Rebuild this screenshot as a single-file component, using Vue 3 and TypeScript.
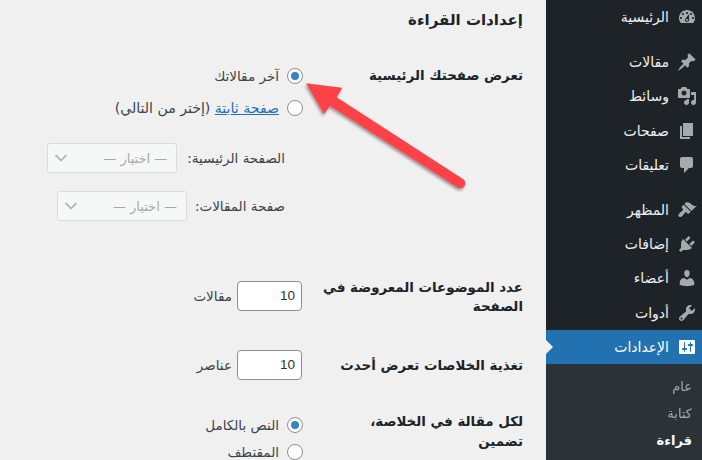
<script setup lang="ts">
const topItems = [
  { label: 'الرئيسية', icon: 'gauge', gap: true },
  { label: 'مقالات', icon: 'pin' },
  { label: 'وسائط', icon: 'media' },
  { label: 'صفحات', icon: 'pages' },
  { label: 'تعليقات', icon: 'comment', gap: true },
  { label: 'المظهر', icon: 'brush' },
  { label: 'إضافات', icon: 'plug' },
  { label: 'أعضاء', icon: 'user' },
  { label: 'أدوات', icon: 'wrench' },
]
const icons: Record<string, string> = {
  gauge: 'M3.760 16h12.480c1.100-1.430 1.760-3.210 1.760-5 0-4.420-3.580-8-8-8s-8 3.580-8 8c0 1.790.660 3.570 1.760 5zm6.240-11c.550 0 1 .45 1 1s-.45 1-1 1-1-.45-1-1 .45-1 1-1zM6 6c.55 0 1 .45 1 1s-.45 1-1 1-1-.45-1-1 .45-1 1-1zm8 0c.55 0 1 .45 1 1s-.45 1-1 1-1-.45-1-1 .45-1 1-1zm-5.370 5.550L12 7v6c0 1.100-.9 2-2 2s-2-.9-2-2c0-.57.240-1.080.630-1.450zM4 10c.55 0 1 .45 1 1s-.45 1-1 1-1-.45-1-1 .45-1 1-1zm12 0c.55 0 1 .45 1 1s-.45 1-1 1-1-.45-1-1 .45-1 1-1zm-5 3c0-.55-.45-1-1-1s-1 .45-1 1 .45 1 1 1 1-.45 1-1z',
  pin: 'M10.440 3.020l1.820-1.820 6.360 6.350-1.830 1.820c-1.050-.68-2.480-.57-3.410.36l-.75.75c-.92.93-1.040 2.350-.35 3.410l-1.830 1.820-2.410-2.410-2.800 2.790c-.42.42-3.380 2.710-3.800 2.290s1.860-3.390 2.280-3.810l2.790-2.790L4.100 9.360l1.830-1.820c1.050.69 2.480.57 3.400-.36l.75-.75c.93-.92 1.050-2.350.36-3.410z',
  media: 'M13 11V4c0-.55-.45-1-1-1h-1.670L9 1H5L3.670 3H2c-.55 0-1 .45-1 1v7c0 .55.45 1 1 1h10c.55 0 1-.45 1-1zM7 4.500c1.380 0 2.500 1.120 2.500 2.500S8.380 9.500 7 9.500 4.500 8.380 4.500 7 5.620 4.500 7 4.500zM14 6h5v10.500c0 1.380-1.120 2.500-2.500 2.500S14 17.880 14 16.500s1.120-2.500 2.500-2.500c.17 0 .34.02.5.050V9h-3V6zm-4 8.050V13h2v3.500c0 1.380-1.120 2.500-2.500 2.500S7 17.880 7 16.500 8.120 14 9.500 14c.17 0 .34.02.5.050z',
  pages: 'M6 15V2h10v13H6zm-1 1h8v2H3V5h2v11z',
  comment: 'M5 2h9c1.100 0 2 .9 2 2v7c0 1.100-.9 2-2 2h-2l-5 5v-5H5c-1.100 0-2-.9-2-2V4c0-1.100.9-2 2-2z',
  brush: 'M14.480 11.060L7.410 3.990l1.500-1.500c.5-.56 2.300-.47 3.510.32 1.210.8 1.430 1.280 2.910 2.100 1.180.64 2.450 1.260 4.450.85zm-.71.71L6.700 4.700 4.930 6.470c-.39.39-.39 1.020 0 1.410l1.060 1.060c.39.39.39 1.030 0 1.420-.6.6-1.430 1.110-2.210 1.690-.35.26-.7.53-1.010.84-1.370 1.250-1.840 2.660-.85 3.650.99.99 2.400.52 3.650-.85.31-.31.58-.66.84-1.010.58-.78 1.090-1.610 1.690-2.210.39-.39 1.030-.39 1.420 0l1.060 1.060c.39.39 1.020.39 1.410 0z',
  plug: 'M13.110 4.360L9.870 7.600 8 5.730l3.240-3.240c.35-.34 1.050-.2 1.560.32.52.51.66 1.210.31 1.550zm-8 1.770l.91-1.120 9.010 9.010-1.190.84c-.71.71-2.630 1.160-3.820 1.160H6.140L4.900 17.260c-.59.59-1.540.59-2.120 0-.59-.58-.59-1.530 0-2.120l1.240-1.240v-3.880c0-1.130.4-3.190 1.090-3.890zm7.260 3.970l3.240-3.240c.34-.35 1.040-.21 1.550.31.52.51.66 1.210.31 1.550l-3.240 3.250z',
  user: 'M10 9.250c-2.270 0-2.730-3.440-2.730-3.440C7 4.020 7.820 2 9.970 2c2.160 0 2.980 2.020 2.710 3.810 0 0-.41 3.440-2.680 3.440zm0 2.570L12.720 10c2.390 0 4.520 2.330 4.520 4.530v2.490s-3.650 1.130-7.240 1.130c-3.650 0-7.240-1.130-7.240-1.130v-2.490c0-2.250 1.940-4.480 4.470-4.480z',
  wrench: 'M16.680 9.770c-1.340 1.340-3.300 1.670-4.950.99l-5.410 6.520c-.99.99-2.590.99-3.580 0s-.99-2.590 0-3.570l6.520-5.420c-.68-1.650-.35-3.610.99-4.950 1.280-1.280 3.120-1.620 4.720-1.060l-2.890 2.890 2.820 2.820 2.860-2.870c.53 1.580.18 3.390-1.080 4.670zM3.810 16.210c.4.39 1.040.39 1.430 0 .4-.4.4-1.040 0-1.430-.39-.4-1.030-.4-1.430 0-.39.39-.39 1.030 0 1.430z',
}
const settingsIcon = 'M18 16V4c0-.55-.45-1-1-1H3c-.55 0-1 .45-1 1v12c0 .55.45 1 1 1h14c.55 0 1-.45 1-1zM8 11h1c.55 0 1 .45 1 1s-.45 1-1 1H8v1.500c0 .28-.22.5-.5.5s-.5-.22-.5-.5V13H6c-.55 0-1-.45-1-1s.45-1 1-1h1V5.500c0-.28.22-.5.5-.5s.5.22.5.5V11zm5-2h-1c-.55 0-1-.45-1-1s.45-1 1-1h1V5.500c0-.28.22-.5.5-.5s.5.22.5.5V7h1c.55 0 1 .45 1 1s-.45 1-1 1h-1v5.500c0 .28-.22.5-.5.5s-.5-.22-.5-.5V9z'
</script>

<template>
  <div class="page">
    <aside class="side">
      <a v-for="it in topItems" :key="it.label" class="item" :class="{ gap: it.gap }">
        <svg class="ico" viewBox="0 0 20 20"><path :d="icons[it.icon]" fill-rule="evenodd" /></svg>
        <span>{{ it.label }}</span>
      </a>
      <a class="item current">
        <svg class="ico white" viewBox="0 0 20 20"><path :d="settingsIcon" fill-rule="evenodd" /></svg>
        <span>الإعدادات</span>
      </a>
      <div class="sub">
        <a>عام</a>
        <a>كتابة</a>
        <a class="on">قراءة</a>
      </div>
    </aside>
    <main class="main">
      <h1>إعدادات القراءة</h1>
      <section class="row first">
        <div class="th">تعرض صفحتك الرئيسية</div>
        <div class="td">
          <label class="radio"><i class="dot on"></i>آخر مقالاتك</label>
          <label class="radio wide"><i class="dot"></i><span><a class="link">صفحة ثابتة</a> (إختر من التالي)</span></label>
          <div class="pick one"><span class="lbl">الصفحة الرئيسية:</span><div class="select"><span>— اختيار —</span><svg viewBox="0 0 16 16"><path d="M2.500 5 8 10.500 13.500 5" /></svg></div></div>
          <div class="pick two"><span class="lbl">صفحة المقالات:</span><div class="select"><span>— اختيار —</span><svg viewBox="0 0 16 16"><path d="M2.500 5 8 10.500 13.500 5" /></svg></div></div>
        </div>
      </section>
      <section class="row num">
        <div class="th">عدد الموضوعات المعروضة في الصفحة</div>
        <div class="td inline"><div class="input">10</div><span>مقالات</span></div>
      </section>
      <section class="row num feed">
        <div class="th">تغذية الخلاصات تعرض أحدث</div>
        <div class="td inline"><div class="input">10</div><span>عناصر</span></div>
      </section>
      <section class="row last">
        <div class="th">لكل مقالة في الخلاصة، تضمين</div>
        <div class="td">
          <label class="radio"><i class="dot on"></i>النص بالكامل</label>
          <label class="radio"><i class="dot"></i>المقتطف</label>
        </div>
      </section>
    </main>
    <svg class="arrow" viewBox="0 0 702 460" width="702" height="460">
      <defs><filter id="sh" x="-20%" y="-20%" width="140%" height="140%"><feDropShadow dx="-1" dy="2" stdDeviation="1.500" flood-color="#000" flood-opacity=".4" /></filter></defs>
      <path filter="url(#sh)" d="M306 83.300 342.300 87.700 336.700 97.300 463 179a5 5 0 0 1-5.500 8.500L330 106 324 114z" fill="#ff4246" />
    </svg>
  </div>
</template>

<style>
html, body { margin: 0; background: #f0f0f1; }
</style>

<style scoped>
.page { position: relative; width: 702px; height: 460px; overflow: hidden; display: flex; direction: rtl; font-family: "DejaVu Sans", sans-serif; color: #3c434a; background: #f0f0f1; font-size: 13.500px; }
.side { width: 156px; flex: none; background: #1d2327; height: 460px; color: #f0f0f1; }
.item { display: flex; align-items: center; height: 34.200px; padding-right: 5px; gap: 8px; font-size: 14px; position: relative; }
.item.gap { margin-bottom: 11px; }
.ico { width: 20px; height: 20px; fill: #a7aaad; flex: none; }
.ico.white { fill: #fff; }
.current { background: #2271b1; color: #fff; }
.current::after { content: ""; position: absolute; left: 0; top: 10px; border: 7px solid transparent; border-left: 7px solid #f0f0f1; border-right: 0; }
.sub { background: #2c3338; padding: 9px 0 0; height: 90px; }
.sub a { display: block; height: 27px; line-height: 27px; padding-right: 10px; font-size: 13px; color: #c3c4c7; opacity: .8; }
.sub a.on { color: #fff; font-weight: 700; opacity: 1; }
.main { flex: 1; min-width: 0; padding: 0 23px 0 0; }
h1 { margin: 0; padding-top: 10px; font-size: 15px; line-height: 20px; font-weight: 700; color: #1d2327; }
.row { display: flex; }
.th { width: 220px; flex: none; box-sizing: border-box; font-size: 13.400px; font-weight: 700; color: #1d2327; line-height: 20px; padding-left: 10px; }
.first { margin-top: 30px; }
.first .th { padding-top: 6px; }
.radio { display: flex; align-items: center; gap: 8px; height: 32px; }
.wide { font-size: 14.100px; }
.dot { width: 14px; height: 14px; border: 1px solid #8c8f94; border-radius: 50%; background: #fff; position: relative; display: block; flex: none; }
.dot.on::after { content: ""; position: absolute; inset: 3px; border-radius: 50%; background: #3582c4; }
.link { color: #2271b1; text-decoration: underline; }
.pick { display: flex; align-items: center; gap: 8px; height: 30px; margin-right: 18px; }
.one { margin-top: 19px; }
.one .lbl { padding-left: 2px; }
.two { margin-top: 18px; }
.select { width: 130px; height: 30px; box-sizing: border-box; border: 1px solid #dcdcde; border-radius: 3px; background: #f6f7f7; color: #a7aaad; display: flex; align-items: center; justify-content: space-between; padding: 0 9px 0 5px; font-size: 13px; }
.select svg { width: 16px; height: 16px; fill: none; stroke: #b5b8bb; stroke-width: 1.800; }
.num { margin-top: 60px; align-items: flex-start; }
.num .th { line-height: 19px; margin-top: -3px; }
.feed { margin-top: 34px; align-items: center; }
.feed .th { margin-top: 0; }
.inline { display: flex; align-items: center; gap: 5px; padding-right: 1px; }
.input { width: 65px; height: 30px; box-sizing: border-box; border: 1px solid #8c8f94; border-radius: 4px; background: #fff; font-size: 13.500px; line-height: 28px; padding-right: 6px; color: #2c3338; font-family: "Liberation Sans", sans-serif; }
.last { margin-top: 31px; }
.last .radio { height: 27px; }
.last .th { padding-top: 1px; padding-left: 40px; }
.arrow { position: absolute; left: 0; top: 0; pointer-events: none; }
</style>
